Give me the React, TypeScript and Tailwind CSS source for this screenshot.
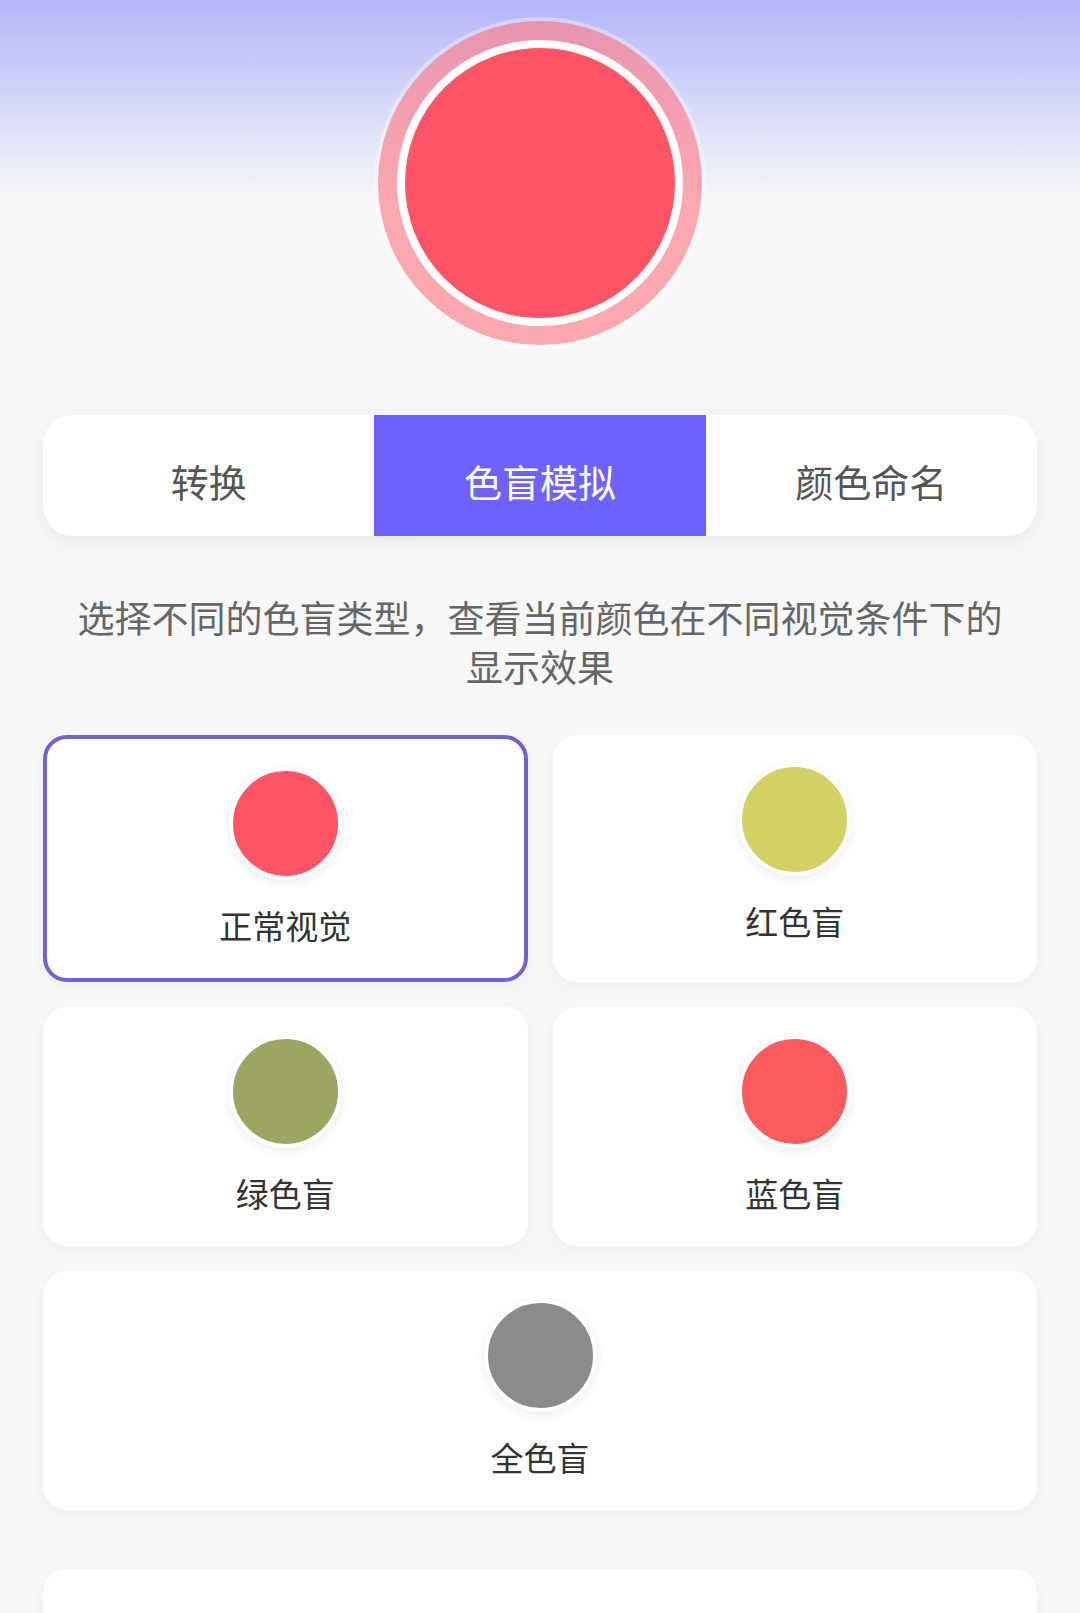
import * as React from "react";

const font = { fontFamily: '"Noto Sans CJK SC", "Noto Sans", sans-serif' };

export default function App() {
  const tabs = ["转换", "色盲模拟", "颜色命名"];
  const active = 1;

  const modes = [
    { name: "正常视觉", color: "#fe5566" },
    { name: "红色盲", color: "#d3d163" },
    { name: "绿色盲", color: "#9ca662" },
    { name: "蓝色盲", color: "#fb5b5d" },
    { name: "全色盲", color: "#8b8b8b" },
  ];
  const selected = 0;

  return (
    <div
      className="min-h-screen bg-[linear-gradient(to_bottom,#b4b4f8_0px,#d6d6f8_100px,#f7f7f8_200px)] px-[43px] overflow-hidden"
      style={font}
    >
      {/* Current colour */}
      <div className="flex justify-center pt-[40px]">
        <div className="w-[286px] h-[286px] rounded-full bg-[#fe5566] border-[8px] border-white shadow-[0_0_0_19px_rgba(254,85,102,0.5),0_0_0_23px_rgba(255,255,255,0.35)]" />
      </div>

      {/* Tabs */}
      <div className="mt-[89px] h-[121px] grid grid-cols-3 bg-white rounded-[30px] overflow-hidden shadow-[0_6px_20px_rgba(0,0,0,0.05)]">
        {tabs.map((tab, i) => (
          <div
            key={tab}
            className={
              i === active
                ? "flex items-center justify-center pt-[10px] bg-[#6e62fe] text-white text-[38px]"
                : "flex items-center justify-center pt-[10px] text-[#555] text-[38px]"
            }
          >
            {tab}
          </div>
        ))}
      </div>

      {/* Description */}
      <p className="mt-[57px] mx-auto w-[940px] text-center text-[37px] leading-[49px] text-[#666]">
        选择不同的色盲类型，查看当前颜色在不同视觉条件下的显示效果
      </p>

      {/* Simulation cards */}
      <div className="mt-[44px] grid grid-cols-2 gap-[25px]">
        {modes.map((mode, i) => (
          <div
            key={mode.name}
            className={
              (i === selected ? "border-[4px] border-[#6f62d6] " : "") +
              (i === 4 ? "col-span-2 " : "") +
              "bg-white rounded-[24px] flex flex-col items-center pt-[28px] pb-[28px] shadow-[0_4px_16px_rgba(0,0,0,0.04)]"
            }
          >
            <div
              className="w-[113px] h-[113px] rounded-full border-[4px] border-white shadow-[0_3px_10px_rgba(0,0,0,0.08)]"
              style={{ backgroundColor: mode.color }}
            />
            <div className="mt-[20px] text-[33px] leading-[50px] text-[#333]">{mode.name}</div>
          </div>
        ))}
      </div>

      {/* Next section (cut off) */}
      <div className="mt-[59px] bg-white rounded-[24px] pt-[36px] pb-[40px] shadow-[0_4px_16px_rgba(0,0,0,0.04)]">
        <div className="text-center text-[33px] leading-[50px] text-[#999]">色盲模拟说明</div>
      </div>
    </div>
  );
}
